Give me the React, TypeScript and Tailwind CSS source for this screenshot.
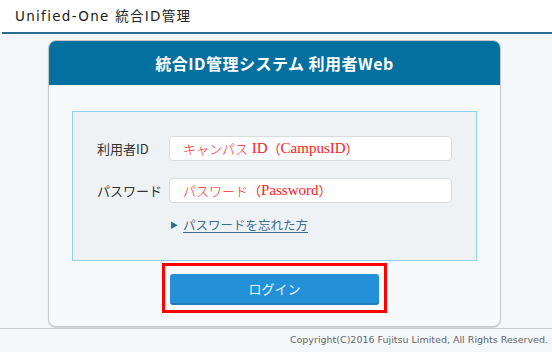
import React from 'react';

export default function App() {
  return (
    <div className="w-[552px] h-[352px] bg-[#f4f7f9] flex flex-col overflow-hidden font-['DejaVu_Sans','Noto_Sans_CJK_JP',sans-serif]">
      {/* Header */}
      <div className="h-[32px] bg-white flex items-center pl-[15px] text-[13.5px] text-[#222] tracking-[1.3px]">
        Unified-One 統合ID管理
      </div>
      <div className="h-[2px] ml-[2px] bg-[#2b6d94]"></div>

      {/* Card */}
      <div className="ml-[48px] mt-[6px] w-[453px] h-[287px] rounded-[8px] border border-[#c4c8cc] shadow-[0_1px_1px_rgba(0,0,0,0.15)] bg-[#f7f9fb] flex flex-col overflow-hidden">
        <div className="h-[44px] shrink-0 bg-[#03709f] flex items-center justify-center text-white font-bold text-[16px] font-['Noto_Sans_CJK_JP',sans-serif] tracking-[0.5px]">
          統合ID管理システム 利用者Web
        </div>

        <div className="flex flex-col items-center">
          {/* Form box */}
          <div className="mt-[26px] w-[405px] h-[150px] border border-[#8fd2f2] bg-[#eef2f5] pl-[24px] pt-[24px] flex flex-col font-['Noto_Sans_CJK_JP',sans-serif]">
            <div className="flex items-center h-[25px]">
              <div className="w-[72px] text-[13px] text-[#333]">利用者ID</div>
              <div className="w-[283px] h-[25px] bg-white border border-[#d8dcdf] rounded-[4px] flex items-center pl-[13px] text-[15px] text-[#ff1a1a] font-['Liberation_Serif','Noto_Sans_CJK_JP',serif]">
                <span className="text-[13px] font-['Noto_Sans_CJK_JP',sans-serif] font-light">キャンパス</span>
                <span>&nbsp;ID</span>
                <span className="text-[13px] font-['Noto_Sans_CJK_JP',sans-serif]">（</span>
                <span>CampusID</span>
                <span className="text-[13px] font-['Noto_Sans_CJK_JP',sans-serif]">）</span>
              </div>
            </div>
            <div className="flex items-center h-[25px] mt-[17px]">
              <div className="w-[72px] text-[13px] text-[#333]">パスワード</div>
              <div className="w-[283px] h-[25px] bg-white border border-[#d8dcdf] rounded-[4px] flex items-center pl-[13px] text-[15px] text-[#ff1a1a] font-['Liberation_Serif','Noto_Sans_CJK_JP',serif]">
                <span className="text-[13px] font-['Noto_Sans_CJK_JP',sans-serif] font-light">パスワード</span>
                <span className="text-[13px] font-['Noto_Sans_CJK_JP',sans-serif]">（</span>
                <span>Password</span>
                <span className="text-[13px] font-['Noto_Sans_CJK_JP',sans-serif]">）</span>
              </div>
            </div>
            <div className="flex items-center ml-[73px] mt-[13px] text-[12.5px]">
              <span className="text-[8px] text-[#2f6c93] mr-[5px]">▶</span>
              <span className="text-[#3c6f90] underline underline-offset-2">パスワードを忘れた方</span>
            </div>
          </div>

          {/* Login */}
          <div className="mt-[2px] w-[225px] h-[50px] border-[3px] border-[#ff0000] flex items-start justify-center pt-[8px]">
            <button className="w-[209px] h-[31px] rounded-[3px] bg-[#2490d8] border-b-2 border-[#1f7cbc] text-[#e8f3fb] text-[13px] font-['Noto_Sans_CJK_JP',sans-serif]">
              ログイン
            </button>
          </div>
        </div>
      </div>

      {/* Footer */}
      <div className="mt-[1px] h-[1px] bg-[#c9cdd0]"></div>
      <div className="flex-1 bg-[#f4f7f9] flex items-center justify-end pr-[4px] text-[9.5px] text-[#666]">
        Copyright(C)2016 Fujitsu Limited, All Rights Reserved.
      </div>
    </div>
  );
}
